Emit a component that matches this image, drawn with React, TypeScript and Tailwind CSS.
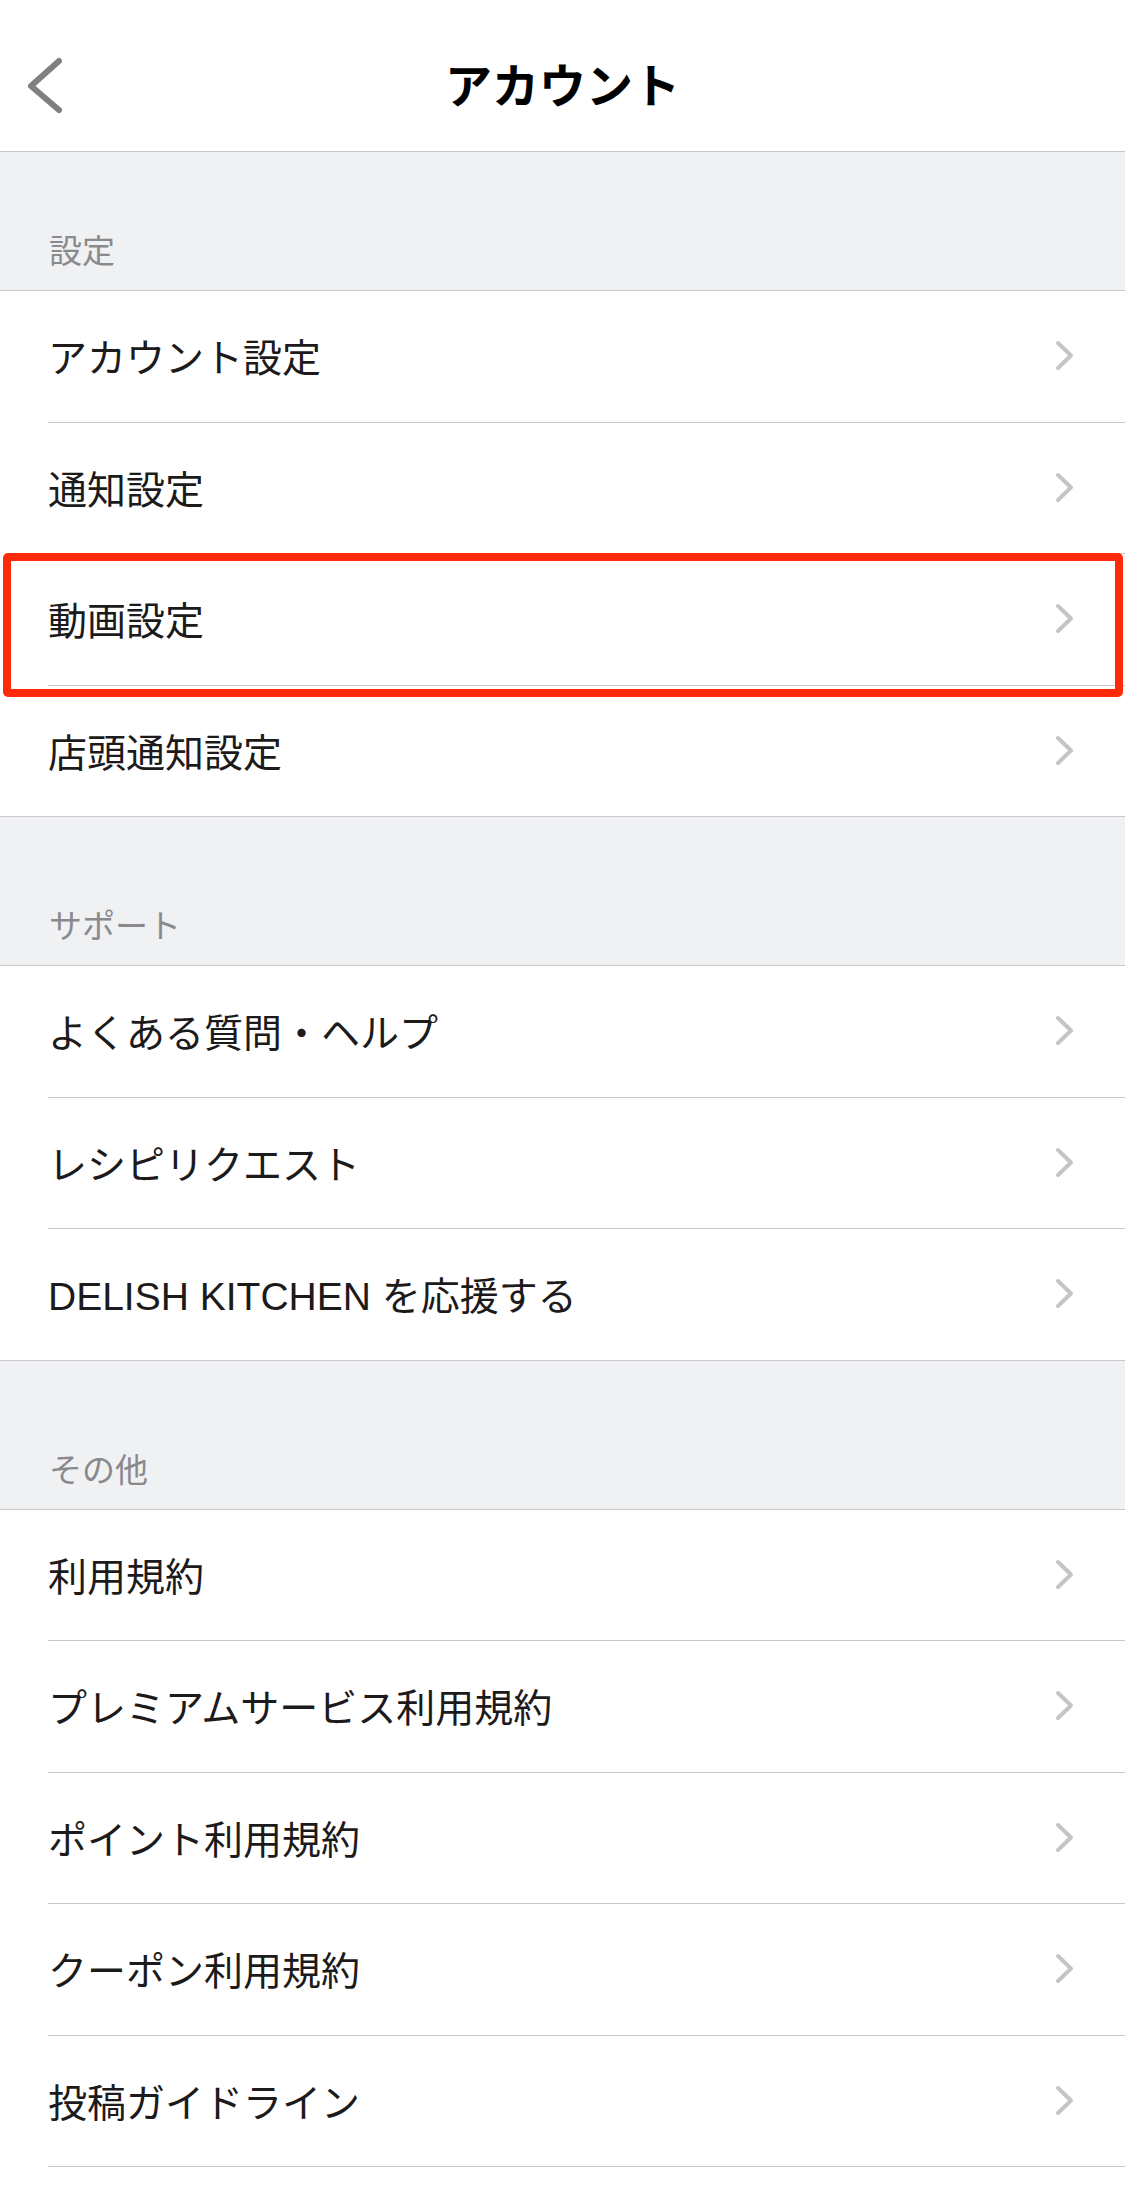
import { ReactNode } from "react";

interface Section {
  title: string;
  gap: string;
  items: string[];
  lastInset?: boolean;
}

const sections: Section[] = [
  {
    title: "設定",
    gap: "h-[138px]",
    items: ["アカウント設定", "通知設定", "動画設定", "店頭通知設定"],
  },
  {
    title: "サポート",
    gap: "h-[148px]",
    items: ["よくある質問・ヘルプ", "レシピリクエスト", "DELISH KITCHEN を応援する"],
  },
  {
    title: "その他",
    gap: "h-[148px]",
    items: ["利用規約", "プレミアムサービス利用規約", "ポイント利用規約", "クーポン利用規約", "投稿ガイドライン"],
    lastInset: true,
  },
];

function ChevronRight() {
  return (
    <svg width="22" height="34" viewBox="0 0 22 34" fill="none">
      <polyline points="4,4 17,16.5 4,29" stroke="#c5c5c9" strokeWidth="4" strokeLinecap="round" strokeLinejoin="round" />
    </svg>
  );
}

function Row({ label, full, children }: { label: string; full: boolean; children?: ReactNode }) {
  return (
    <div className={`relative h-[131.5px] pl-[48px] bg-white ${full ? "border-b border-[#c8c8cc]" : ""}`}>
      <div className={`flex h-full items-center justify-between pr-[49px] ${full ? "" : "border-b border-[#c8c8cc]"}`}>
        <span className="pt-[5px] text-[39px] leading-none text-[#1c1a1a]">{label}</span>
        <ChevronRight />
      </div>
      {children}
    </div>
  );
}

export default function App() {
  return (
    <div
      className="relative min-h-[2205px] w-[1125px] bg-white"
      style={{ fontFamily: '"Liberation Sans", "Noto Sans CJK JP", sans-serif' }}
    >
      <header className="grid h-[152px] grid-cols-[1fr_auto_1fr] items-center border-b border-[#c6c6c8] bg-white">
        <div className="pl-[25px] pt-[20px]">
          <svg width="40" height="60" viewBox="0 0 40 60" fill="none">
            <polyline points="34,5 6,30 34,54" stroke="#808080" strokeWidth="6" strokeLinecap="round" strokeLinejoin="round" />
          </svg>
        </div>
        <h1 className="mt-[22px] text-[47px] font-bold leading-none text-black">アカウント</h1>
        <div />
      </header>

      {sections.map((section) => (
        <section key={section.title}>
          <div className={`flex items-end bg-[#f0f1f3] pb-[22px] pl-[49px] ${section.gap}`}>
            <span className="text-[33px] leading-none text-[#8a8a8e]">{section.title}</span>
          </div>
          <div className="border-t border-[#c8c8cc]">
            {section.items.map((item, i) => (
              <Row key={item} label={item} full={i === section.items.length - 1 && !section.lastInset} />
            ))}
          </div>
        </section>
      ))}

      {/* annotation box over 動画設定 */}
      <div className="pointer-events-none absolute left-[3px] top-[553px] h-[144px] w-[1120px] rounded-[5px] border-[8px] border-[#ff2a0a]" />
    </div>
  );
}
